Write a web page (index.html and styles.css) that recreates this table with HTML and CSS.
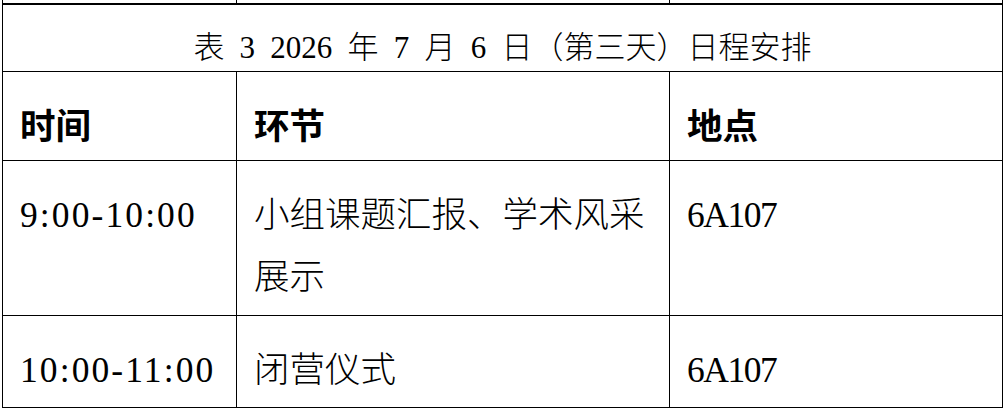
FILE: index.html
```html
<!DOCTYPE html>
<html lang="zh-CN">
<head>
<meta charset="utf-8">
<title>表 3 日程安排</title>
<link rel="stylesheet" href="styles.css">
</head>
<body>
<div class="sched">
  <div class="cell frag"></div>
  <div class="cell frag"></div>
  <div class="cell frag last"></div>

  <div class="cell title">表 3 2026 年 7 月 6 日（第三天）日程安排</div>

  <div class="cell head">时间</div>
  <div class="cell head">环节</div>
  <div class="cell head last">地点</div>

  <div class="cell"><span class="time">9:00-10:00</span></div>
  <div class="cell">小组课题汇报、学术风采展示</div>
  <div class="cell last"><span class="room">6A107</span></div>

  <div class="cell bottom"><span class="time">10:00-11:00</span></div>
  <div class="cell bottom">闭营仪式</div>
  <div class="cell bottom last"><span class="room">6A107</span></div>
</div>
</body>
</html>
```

FILE: styles.css
```css
html, body {
  margin: 0;
  padding: 0;
  background: #fff;
}

.sched {
  display: grid;
  grid-template-columns: 234px 433px 334px;
  grid-template-rows: 3px 68px 89px 155px 93px;
  margin-left: 2px;
  color: #000;
  font-family: "Liberation Serif", "Noto Sans CJK SC", serif;
}

.cell {
  box-sizing: border-box;
  border-left: 1px solid #000;
  border-top: 1px solid #000;
  padding: 23px 12px 0 17px;
  font-size: 35.5px;
  line-height: 62px;
  font-weight: 300;
  overflow: hidden;
}

.cell.frag {
  border-top: 0;
  padding: 0;
}

.cell.last {
  border-right: 1px solid #000;
}

.cell.bottom {
  border-bottom: 1px solid #000;
}

.cell.title {
  grid-column: 1 / -1;
  border-top: 2px solid #000;
  border-right: 1px solid #000;
  padding: 23px 0 0 0;
  text-align: center;
  font-size: 31px;
  line-height: 40px;
  word-spacing: 7.5px;
}

.cell.head {
  padding-top: 21px;
  font-family: "Noto Sans CJK SC", sans-serif;
  font-weight: 700;
}

.time {
  letter-spacing: 2.1px;
}

.room {
  letter-spacing: -1.5px;
}
```
